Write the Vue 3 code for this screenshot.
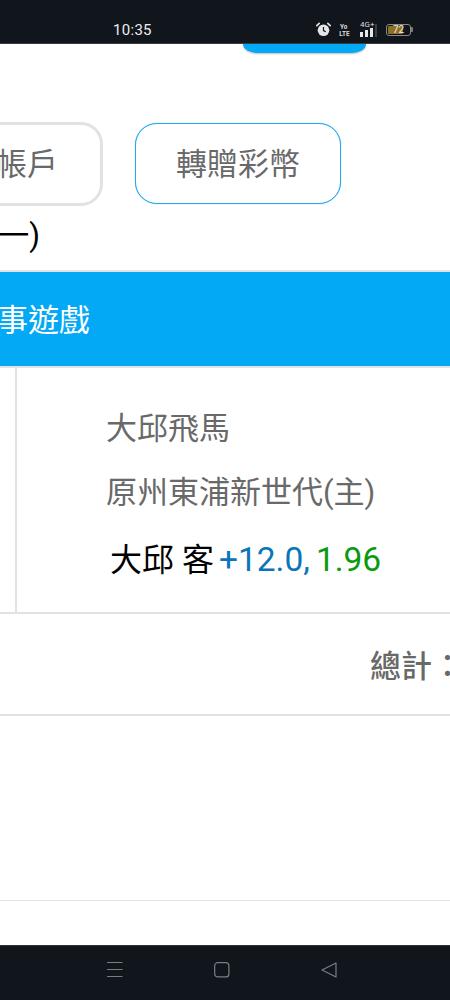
<template>
  <div class="screen">
    <header class="status-bar">
      <span class="clock">10:35</span>
      <div class="status-icons">
        <svg class="alarm" width="15" height="15" viewBox="0 0 15 15">
          <circle cx="7.5" cy="8.3" r="5.8" fill="#e6e6e6" />
          <path d="M7.5 5v3.6l2.3 1.2" fill="none" stroke="#11151c" stroke-width="1.2" />
          <path d="M.8 3.6 3.2 1.3M14.2 3.6 11.8 1.3" stroke="#e6e6e6" stroke-width="1.6" stroke-linecap="round" />
        </svg>
        <span class="volte"><b>Yo</b><b>LTE</b></span>
        <div class="signal">
          <span class="net">4G+</span>
          <svg width="20" height="9" viewBox="0 0 20 9">
            <rect x="0" y="4" width="3" height="5" fill="#e6e6e6" />
            <rect x="5" y="2" width="3" height="7" fill="#e6e6e6" />
            <rect x="10" y="0" width="3" height="9" fill="#e6e6e6" />
            <rect x="15" y="-4" width="2" height="13" fill="#3b3e44" />
          </svg>
        </div>
        <div class="battery">
          <div class="battery-body">
            <div class="battery-fill" :style="{ width: battery + '%' }"></div>
            <span>{{ battery }}</span>
          </div>
          <i class="battery-tip"></i>
        </div>
      </div>
    </header>

    <div class="top-btn"></div>

    <div class="toolbar">
      <button class="btn btn-gray">提款帳戶</button>
      <button class="btn btn-blue">轉贈彩幣</button>
    </div>

    <div class="day"><span>(星期一)</span></div>

    <div class="section-head"><span>賽事遊戲</span></div>

    <div class="detail">
      <div class="detail-side"></div>
      <div class="detail-main">
        <div class="line">大邱飛馬</div>
        <div class="line">原州東浦新世代(主)</div>
        <div class="line pick">
          <span class="team">大邱 客</span>
          <span class="odds-a">+12.0,</span>
          <span class="odds-b">1.96</span>
        </div>
      </div>
    </div>

    <div class="total"><span>總計：</span></div>

    <div class="spacer"></div>
    <div class="foot"></div>

    <nav class="nav-bar">
      <svg width="16" height="16" viewBox="0 0 16 16">
        <path d="M0 .5h15.5M0 7.5h15.5M0 14.5h15.5" stroke="#7a7e83" fill="none" />
      </svg>
      <svg width="16" height="16" viewBox="0 0 16 16">
        <rect x=".7" y=".7" width="14.2" height="14.2" rx="3" stroke="#7a7e83" stroke-width="1.2" fill="none" />
      </svg>
      <svg width="16" height="16" viewBox="0 0 16 16">
        <path d="M15 1 1 8l14 7z" stroke="#7a7e83" stroke-width="1.2" stroke-linejoin="round" fill="none" />
      </svg>
    </nav>
  </div>
</template>

<script setup>
const battery = 72
</script>

<style scoped>
.screen {
  width: 450px;
  height: 1000px;
  display: flex;
  flex-direction: column;
  overflow: hidden;
  background: #fff;
  font-family: Roboto, "Noto Sans CJK TC", sans-serif;
  color: #696969;
}
.status-bar {
  height: 44px;
  flex: none;
  box-sizing: border-box;
  background: #11151c;
  border-bottom: 1px solid #3a3d42;
  display: flex;
  align-items: center;
  padding: 16px 0 0 113px;
}
.clock {
  width: 38px;
  font-size: 15px;
  letter-spacing: .3px;
  color: #eee;
  white-space: nowrap;
}
.status-icons {
  margin-left: 165px;
  display: flex;
  align-items: center;
}
.alarm {
  display: block;
}
.volte {
  margin-left: 8px;
  display: flex;
  flex-direction: column;
  align-items: center;
  width: 10px;
  color: #ddd;
  font-size: 8px;
  line-height: 7px;
}
.volte b {
  font-weight: 700;
  transform: scaleX(.8);
}
.signal {
  margin-left: 11px;
  width: 20px;
  display: flex;
  flex-direction: column;
  align-items: flex-start;
}
.signal svg {
  display: block;
  overflow: visible;
}
.net {
  font-size: 8px;
  line-height: 6px;
  color: #ddd;
}
.battery {
  margin-left: 6px;
  display: flex;
  align-items: center;
}
.battery-body {
  position: relative;
  width: 25px;
  height: 12px;
  box-sizing: border-box;
  border: 1px solid #8a8a86;
  border-radius: 3px;
  padding: 1px;
}
.battery-fill {
  height: 100%;
  background: #8d7320;
  border-radius: 1px;
}
.battery-body span {
  position: absolute;
  inset: 0;
  text-align: center;
  font-size: 10px;
  line-height: 10px;
  color: #eee;
}
.battery-tip {
  width: 2px;
  height: 5px;
  background: #77787a;
  border-radius: 0 1px 1px 0;
}
.top-btn {
  flex: none;
  width: 123px;
  height: 9px;
  margin-left: 243px;
  background: #03a9f4;
  border-radius: 0 0 14px 14px / 0 0 9px 9px;
  box-shadow: 0 1px 2px rgba(0, 0, 0, .25);
}
.toolbar {
  flex: none;
  height: 84px;
  margin: 69px 0 0 -111px;
  display: flex;
  align-items: flex-start;
  gap: 32px;
}
.btn {
  box-sizing: border-box;
  background: #fff;
  font-family: inherit;
  font-size: 31px;
  color: #696969;
  white-space: nowrap;
  padding: 0 0 5px;
}
.btn-gray {
  flex: none;
  width: 214px;
  height: 84px;
  border: 3px solid #e2e2e2;
  border-radius: 22px;
}
.btn-blue {
  flex: none;
  width: 206px;
  height: 81px;
  margin-top: 1px;
  border: 1px solid #2aa8e8;
  box-shadow: 0 0 1px #2aa8e8;
  border-radius: 22px;
}
.day {
  flex: none;
  width: 40px;
  height: 64px;
  display: flex;
  justify-content: flex-end;
  overflow: hidden;
  font-size: 31px;
  line-height: 60px;
  color: #000;
  white-space: nowrap;
}
.day span {
  flex: none;
}
.section-head {
  flex: none;
  height: 98px;
  box-sizing: border-box;
  background: #03a9f4;
  border-top: 2px solid #e2e2e2;
  border-bottom: 2px solid #e2e2e2;
  display: flex;
  align-items: center;
  padding-bottom: 3px;
  color: #fff;
  font-size: 31px;
  white-space: nowrap;
}
.section-head span {
  margin-left: -34px;
}
.detail {
  flex: none;
  height: 246px;
  box-sizing: border-box;
  border-bottom: 2px solid #e2e2e2;
  display: flex;
}
.detail-side {
  width: 15px;
  flex: none;
  border-right: 2px solid #e2e2e2;
}
.detail-main {
  flex: 1;
  padding: 29px 0 0 89px;
}
.line {
  height: 64px;
  line-height: 64px;
  font-size: 31px;
  white-space: nowrap;
}
.pick {
  margin: 3px 0 0 4px;
  color: #000;
  font-size: 32px;
}
.team {
  margin-right: 5px;
}
.odds-a,
.odds-b {
  font-size: 33.5px;
}
.odds-a {
  color: #0b75b9;
}
.odds-b {
  margin-left: 6px;
  color: #0a9a10;
}
.total {
  flex: none;
  height: 102px;
  box-sizing: border-box;
  border-bottom: 2px solid #e2e2e2;
  padding: 0 0 2px 370px;
  display: flex;
  align-items: center;
  font-size: 31px;
  font-weight: 500;
  white-space: nowrap;
}
.spacer {
  flex: none;
  height: 184px;
  border-bottom: 1px solid #e4e4e4;
}
.foot {
  flex: 1;
}
.nav-bar {
  flex: none;
  height: 55px;
  box-sizing: border-box;
  background: #11151c;
  border-top: 1px solid #2e3238;
  display: flex;
  align-items: center;
  padding: 0 0 7px 107px;
  gap: 91px;
}
.nav-bar svg {
  display: block;
}
</style>
